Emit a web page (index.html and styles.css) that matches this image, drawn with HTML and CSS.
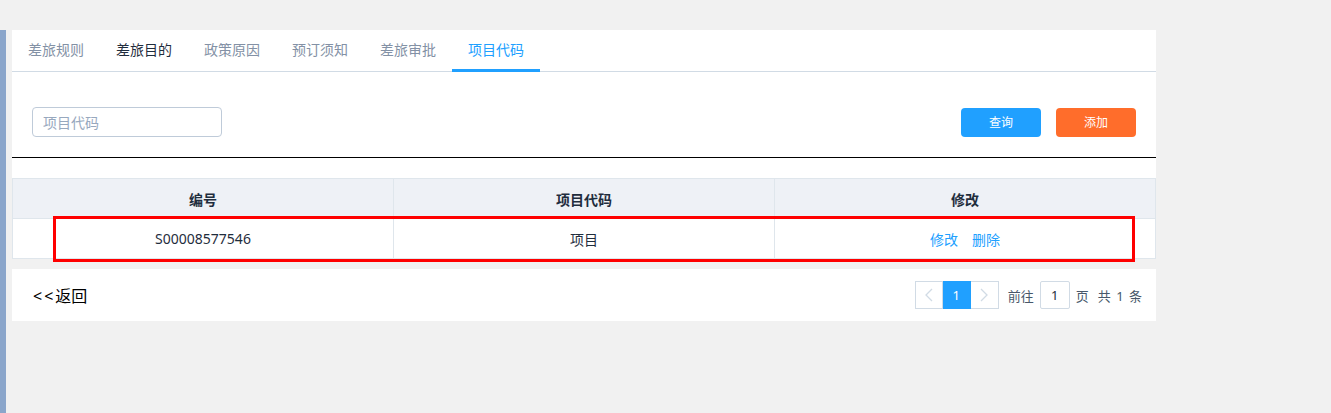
FILE: index.html
```html
<!DOCTYPE html>
<html lang="zh-CN">
<head>
<meta charset="utf-8">
<title>项目代码</title>
<link rel="stylesheet" href="styles.css">
</head>
<body>
<div class="app">
  <aside class="sidebar"></aside>
  <main class="main">
    <section class="panel">
      <nav class="tabs">
        <div class="tab">差旅规则</div>
        <div class="tab tab-hover">差旅目的</div>
        <div class="tab">政策原因</div>
        <div class="tab">预订须知</div>
        <div class="tab">差旅审批</div>
        <div class="tab tab-active">项目代码</div>
      </nav>
      <div class="toolbar">
        <input class="search" type="text" placeholder="项目代码">
        <div class="actions">
          <button class="btn btn-primary">查询</button>
          <button class="btn btn-orange">添加</button>
        </div>
      </div>
      <div class="divider"></div>
      <div class="table-wrap">
        <table class="grid">
          <thead>
            <tr><th>编号</th><th>项目代码</th><th>修改</th></tr>
          </thead>
          <tbody>
            <tr>
              <td>S00008577546</td>
              <td>项目</td>
              <td><a class="link">修改</a><a class="link">删除</a></td>
            </tr>
          </tbody>
        </table>
        <div class="highlight"></div>
      </div>
    </section>
    <section class="footer">
      <a class="back"><span class="back-arrows">&lt;&lt;</span>返回</a>
      <div class="pager">
        <button class="pg-btn pg-arrow"><svg width="8" height="14" viewBox="0 0 8 14"><path d="M7 1 1 7l6 6" fill="none" stroke="#d1dbe5" stroke-width="1.3"/></svg></button>
        <button class="pg-btn pg-active">1</button>
        <button class="pg-btn pg-arrow"><svg width="8" height="14" viewBox="0 0 8 14"><path d="M1 1l6 6-6 6" fill="none" stroke="#d1dbe5" stroke-width="1.3"/></svg></button>
        <span class="pg-text pg-goto">前往</span>
        <input class="pg-input" type="text" value="1">
        <span class="pg-text pg-unit">页</span>
        <span class="pg-text pg-total">共 1 条</span>
      </div>
    </section>
  </main>
</div>
</body>
</html>
```

FILE: styles.css
```css
* { box-sizing: border-box; }
html, body { margin: 0; padding: 0; }
body {
  background: #f1f1f1;
  font-family: "Noto Sans", "Noto Sans CJK SC", sans-serif;
  font-size: 14px;
  color: #1f2d3d;
}
.app {
  display: flex;
  min-height: 100vh;
  padding-top: 30px;
}
.sidebar {
  width: 6px;
  background: #8ba6cb;
  flex: none;
}
.main {
  width: 1144px;
  margin-left: 6px;
}
.panel { background: #fff; }
.tabs {
  display: flex;
  height: 42px;
  border-bottom: 1px solid #d1dbe5;
}
.tab {
  height: 42px;
  line-height: 39px;
  padding: 0 16px;
  font-size: 14px;
  color: #8391a5;
  border-bottom: 3px solid transparent;
  margin-bottom: -1px;
}
.tab-hover { color: #1f2d3d; }
.tab-active { color: #20a0ff; border-bottom-color: #20a0ff; }
.toolbar {
  display: flex;
  justify-content: space-between;
  align-items: center;
  padding: 35px 20px 20px 20px;
}
.search {
  width: 190px;
  height: 30px;
  border: 1px solid #bfcbd9;
  border-radius: 4px;
  padding: 0 10px;
  font: inherit;
  font-size: 14px;
  color: #1f2d3d;
  outline: none;
}
.search::placeholder { color: #97a8be; }
.actions { display: flex; gap: 15px; }
.btn {
  width: 80px;
  height: 29px;
  border: none;
  border-radius: 4px;
  color: #fff;
  font: inherit;
  font-size: 12px;
  padding: 0;
}
.btn-primary { background: #20a0ff; }
.btn-orange { background: #ff6d2b; }
.divider { height: 1px; background: #000; }
.table-wrap {
  position: relative;
  padding-top: 20px;
}
.grid {
  width: 100%;
  table-layout: fixed;
  border-collapse: collapse;
}
.grid th, .grid td {
  height: 40px;
  border: 1px solid #dfe6ec;
  text-align: center;
  padding: 0;
  font-size: 14px;
}
.grid th {
  background: #eef1f6;
  font-weight: bold;
  color: #1f2d3d;
}
.grid td { color: #1f2d3d; }
.link {
  color: #20a0ff;
  font-size: 14px;
  margin: 0 7px;
}
.highlight {
  position: absolute;
  left: 41px;
  top: 58px;
  width: 1082px;
  height: 46px;
  border: 3px solid #ff0000;
}
.footer {
  margin-top: 10px;
  background: #fff;
  height: 52px;
  display: flex;
  align-items: center;
  justify-content: space-between;
  padding: 0 14px 0 21px;
}
.back {
  font-size: 16px;
  color: #000;
}
.back-arrows {
  letter-spacing: 2px;
}
.pager {
  display: flex;
  align-items: center;
}
.pg-btn {
  width: 28px;
  height: 28px;
  border: 1px solid #d1dbe5;
  background: #fff;
  padding: 0;
  display: flex;
  align-items: center;
  justify-content: center;
  font: inherit;
  font-size: 13px;
}
.pg-btn + .pg-btn { border-left: none; }
.pg-active {
  background: #20a0ff;
  border-color: #20a0ff;
  color: #fff;
}
.pg-text {
  font-size: 13px;
  color: #48576a;
}
.pg-goto { margin-left: 9px; margin-right: 6px; }
.pg-input {
  width: 30px;
  height: 28px;
  border: 1px solid #d1dbe5;
  border-radius: 2px;
  text-align: center;
  font: inherit;
  font-size: 13px;
  color: #1f2d3d;
  padding: 0;
}
.pg-unit { margin-left: 6px; }
.pg-total { margin-left: 9px; word-spacing: 2px; }
```
